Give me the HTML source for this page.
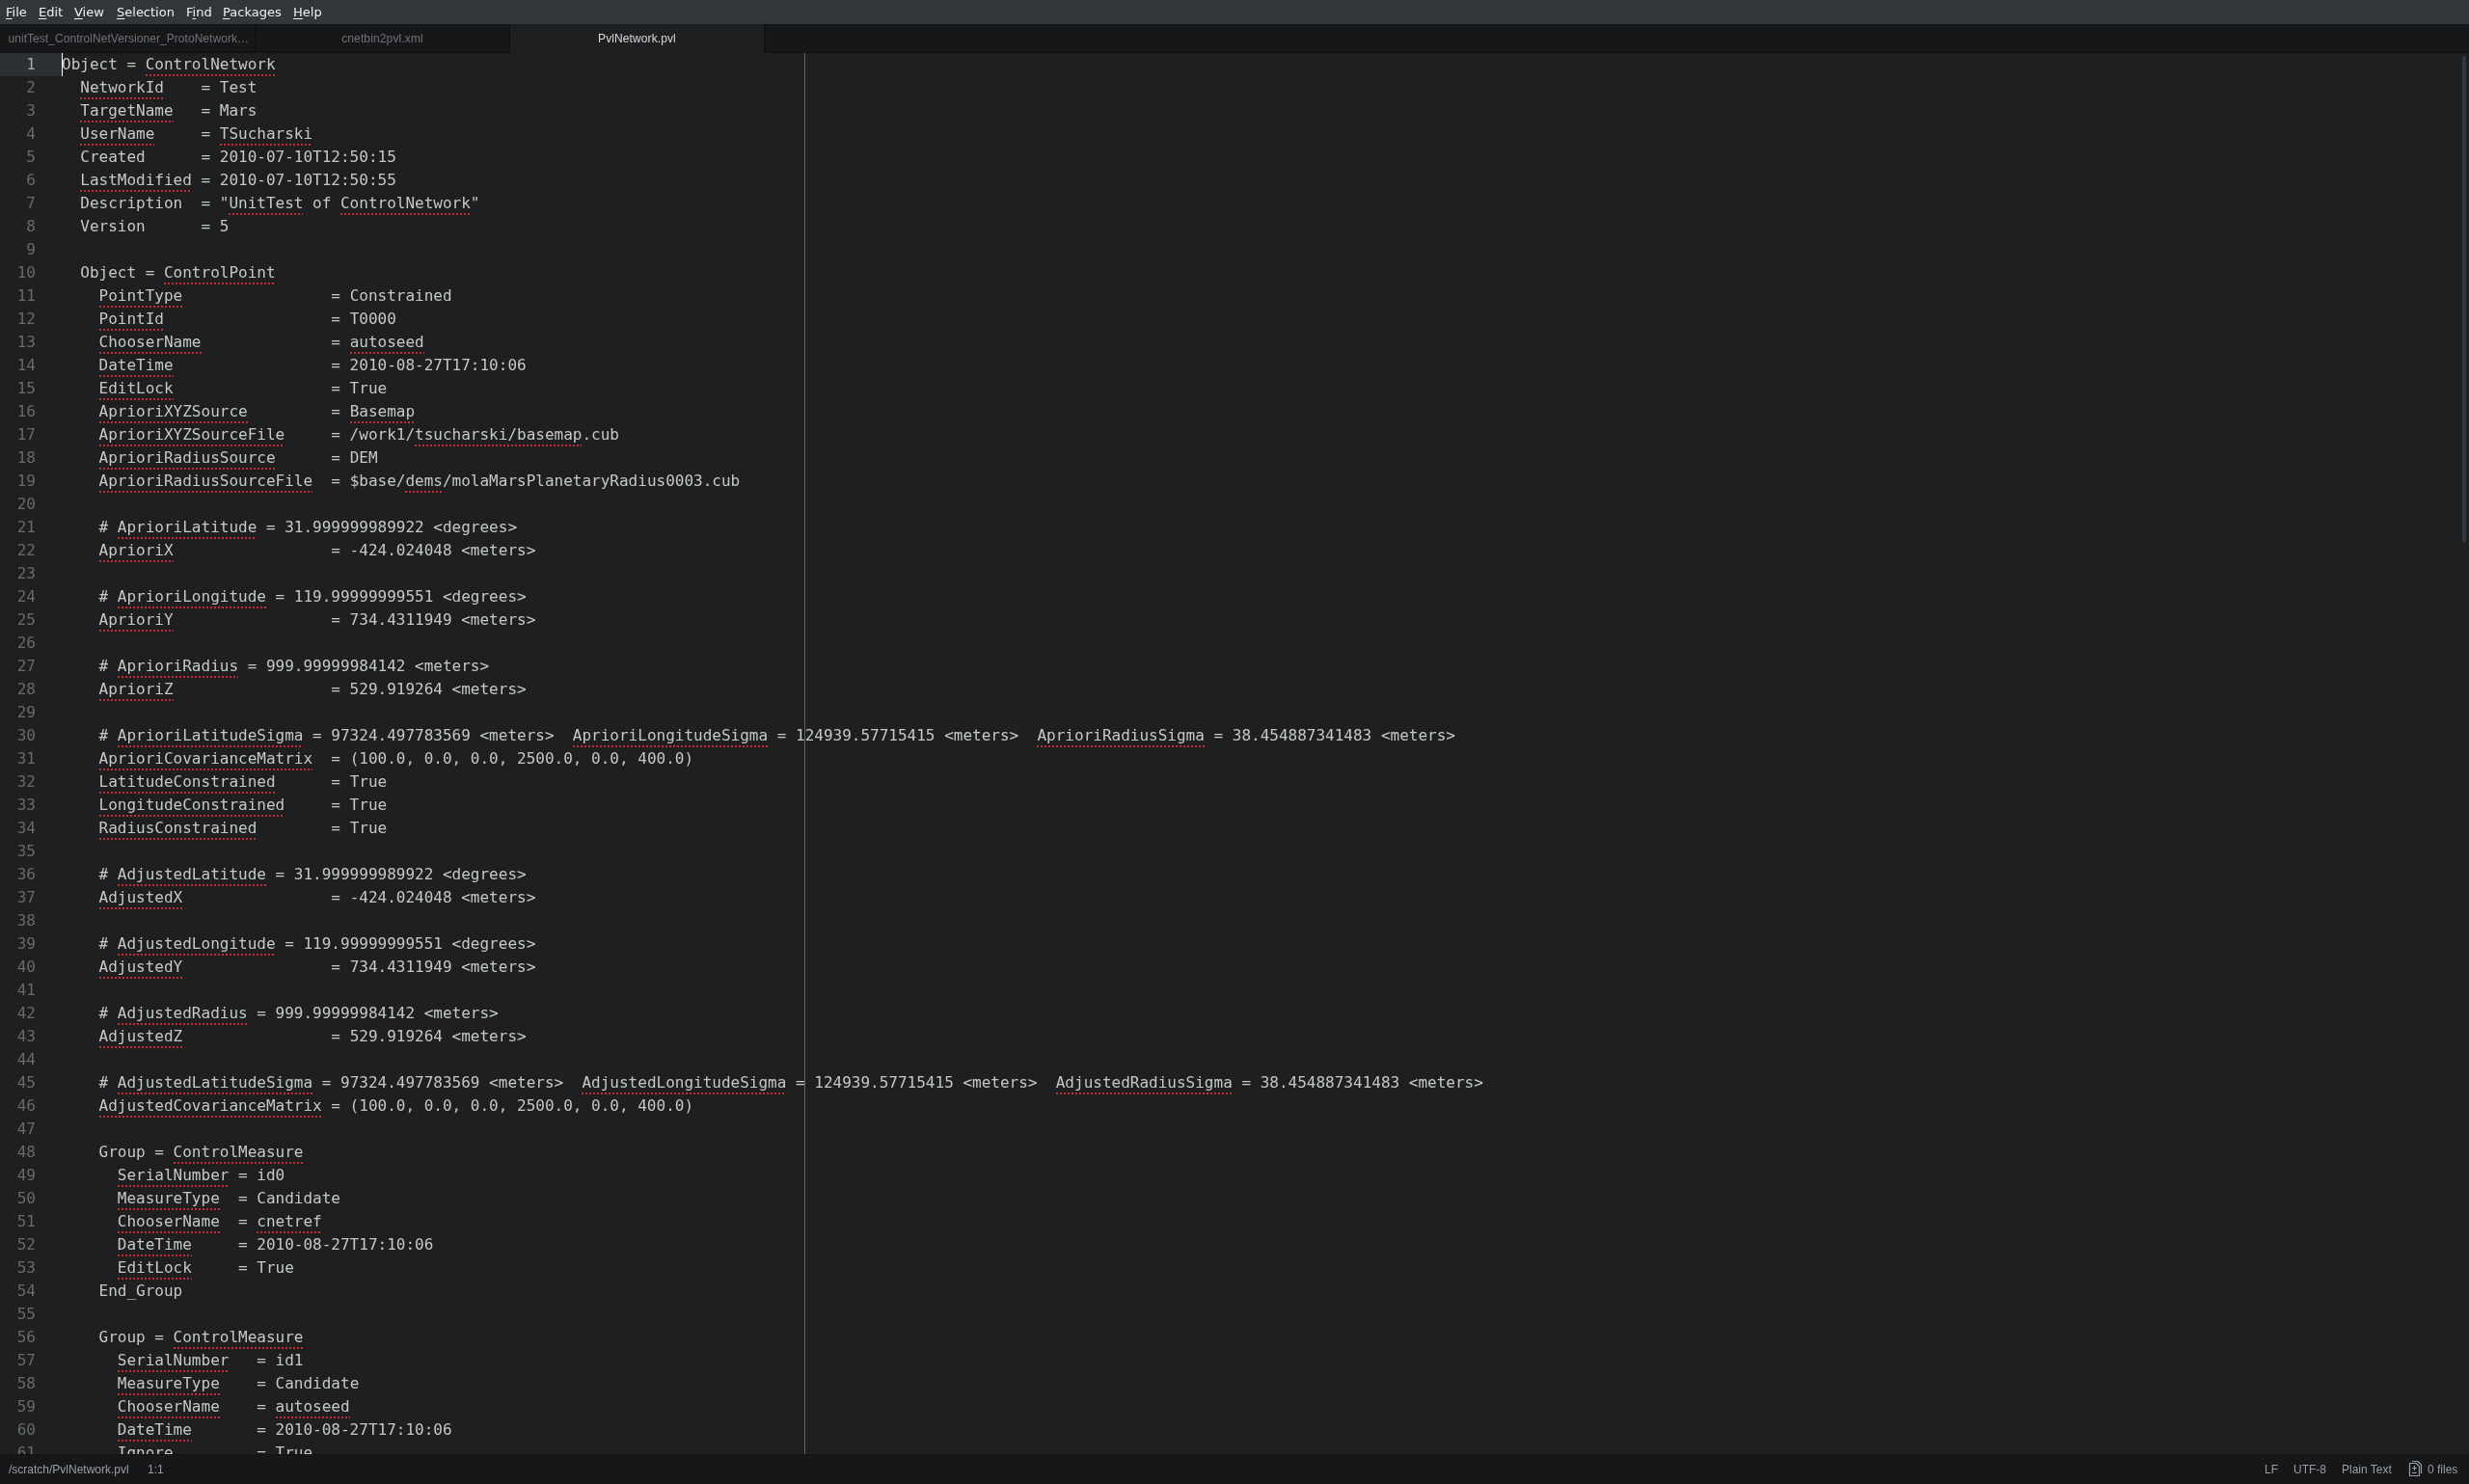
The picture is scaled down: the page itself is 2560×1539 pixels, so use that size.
<!DOCTYPE html>
<html>
<head>
<meta charset="utf-8">
<title>PvlNetwork.pvl - Atom</title>
<style>
html, body { margin: 0; padding: 0; }
body { width: 2560px; height: 1539px; overflow: hidden; background: #1d1f21; position: relative; font-family: "DejaVu Sans", "Liberation Sans", sans-serif; }
#app { position: absolute; left: 0; top: 0; width: 2560px; height: 1539px; will-change: transform; }
#menubar { position: absolute; left: 0; top: 0; width: 2560px; height: 25px; background: #31363b; color: #eff0f1; font-size: 13px; line-height: 25px; white-space: nowrap; }
#menubar span.mi { position: absolute; top: 0; }
#menubar u { text-decoration: underline; text-underline-offset: 2px; }
#tabbar { position: absolute; left: 0; top: 25px; width: 2560px; height: 30px; background: #161719; box-shadow: inset 0 -1px 0 #111214, inset 0 1px 0 #121315; }
.tab { position: absolute; top: 0; height: 29px; width: 264px; box-sizing: border-box; border-left: 1px solid #101113; color: #6f7275; font-size: 12px; line-height: 31px; text-align: center; white-space: nowrap; overflow: hidden; font-family: "Liberation Sans", sans-serif; }
.tab.active { background: #1d1f21; color: #d7dadc; height: 30px; }
#editor { position: absolute; left: 0; top: 55px; width: 2560px; height: 1453px; overflow: hidden; background: #1d1f21; font-family: "DejaVu Sans Mono", "Liberation Mono", monospace; font-size: 16px; line-height: 24px; color: #c5c8c6; }
#gutter { position: absolute; left: 0; top: 0; width: 64px; }
#gutter .n { height: 24px; text-align: right; padding-right: 27px; color: #686b6a; }
#gutter .n.cur { background: #2c2f33; color: #a9abaa; }
#code { position: absolute; left: 64px; top: 0; }
#code .line { height: 24px; white-space: pre; }
.m { display: inline-block; height: 24px; vertical-align: top; background: repeating-linear-gradient(to right, rgba(255,51,51,0.75) 0, rgba(255,51,51,0.75) 2px, transparent 2px, transparent 4px) left bottom / 100% 2px no-repeat; }
#cursor { position: absolute; left: 64px; top: 0; width: 1px; height: 24px; background: #fff; }
#wrap { position: absolute; left: 834px; top: 0; width: 1px; height: 1453px; background: #60656a; }
#sb { position: absolute; left: 2553px; top: 3px; width: 4px; height: 505px; border-radius: 2px; background: #32373b; }
#status { position: absolute; left: 0; top: 1508px; width: 2560px; height: 31px; background: #161719; color: #9a9da1; font-size: 12px; line-height: 31px; white-space: nowrap; font-family: "Liberation Sans", sans-serif; box-shadow: inset 0 1px 0 #111214; }
#status svg { position: absolute; left: 2496px; top: 6px; }
#status span { position: absolute; top: 1px; }
</style>
</head>
<body>
<div id="app">
<div id="menubar">
<span class="mi" style="left:6px"><u>F</u>ile</span>
<span class="mi" style="left:40px"><u>E</u>dit</span>
<span class="mi" style="left:77px"><u>V</u>iew</span>
<span class="mi" style="left:121px"><u>S</u>election</span>
<span class="mi" style="left:193px">F<u>i</u>nd</span>
<span class="mi" style="left:231px"><u>P</u>ackages</span>
<span class="mi" style="left:304px"><u>H</u>elp</span>
</div>
<div id="tabbar">
<div class="tab" style="left:0;border-left:0;text-align:left;padding-left:8.5px;letter-spacing:0.05px">unitTest_ControlNetVersioner_ProtoNetwork…</div>
<div class="tab" style="left:264px;letter-spacing:0.13px">cnetbin2pvl.xml</div>
<div class="tab active" style="left:528px;letter-spacing:0.1px">PvlNetwork.pvl</div>
<div class="tab" style="left:792px;width:1px"></div>
</div>
<div id="editor">
<div id="gutter">
<div class="n cur">1</div>
<div class="n">2</div>
<div class="n">3</div>
<div class="n">4</div>
<div class="n">5</div>
<div class="n">6</div>
<div class="n">7</div>
<div class="n">8</div>
<div class="n">9</div>
<div class="n">10</div>
<div class="n">11</div>
<div class="n">12</div>
<div class="n">13</div>
<div class="n">14</div>
<div class="n">15</div>
<div class="n">16</div>
<div class="n">17</div>
<div class="n">18</div>
<div class="n">19</div>
<div class="n">20</div>
<div class="n">21</div>
<div class="n">22</div>
<div class="n">23</div>
<div class="n">24</div>
<div class="n">25</div>
<div class="n">26</div>
<div class="n">27</div>
<div class="n">28</div>
<div class="n">29</div>
<div class="n">30</div>
<div class="n">31</div>
<div class="n">32</div>
<div class="n">33</div>
<div class="n">34</div>
<div class="n">35</div>
<div class="n">36</div>
<div class="n">37</div>
<div class="n">38</div>
<div class="n">39</div>
<div class="n">40</div>
<div class="n">41</div>
<div class="n">42</div>
<div class="n">43</div>
<div class="n">44</div>
<div class="n">45</div>
<div class="n">46</div>
<div class="n">47</div>
<div class="n">48</div>
<div class="n">49</div>
<div class="n">50</div>
<div class="n">51</div>
<div class="n">52</div>
<div class="n">53</div>
<div class="n">54</div>
<div class="n">55</div>
<div class="n">56</div>
<div class="n">57</div>
<div class="n">58</div>
<div class="n">59</div>
<div class="n">60</div>
<div class="n">61</div>
</div>
<div id="code">
<div class="line">Object = <span class="m">ControlNetwork</span></div>
<div class="line">  <span class="m">NetworkId</span>    = Test</div>
<div class="line">  <span class="m">TargetName</span>   = Mars</div>
<div class="line">  <span class="m">UserName</span>     = <span class="m">TSucharski</span></div>
<div class="line">  Created      = 2010-07-10T12:50:15</div>
<div class="line">  <span class="m">LastModified</span> = 2010-07-10T12:50:55</div>
<div class="line">  Description  = "<span class="m">UnitTest</span> of <span class="m">ControlNetwork</span>"</div>
<div class="line">  Version      = 5</div>
<div class="line"></div>
<div class="line">  Object = <span class="m">ControlPoint</span></div>
<div class="line">    <span class="m">PointType</span>                = Constrained</div>
<div class="line">    <span class="m">PointId</span>                  = T0000</div>
<div class="line">    <span class="m">ChooserName</span>              = <span class="m">autoseed</span></div>
<div class="line">    <span class="m">DateTime</span>                 = 2010-08-27T17:10:06</div>
<div class="line">    <span class="m">EditLock</span>                 = True</div>
<div class="line">    <span class="m">AprioriXYZSource</span>         = <span class="m">Basemap</span></div>
<div class="line">    <span class="m">AprioriXYZSourceFile</span>     = /work1/<span class="m">tsucharski/basemap</span>.cub</div>
<div class="line">    <span class="m">AprioriRadiusSource</span>      = DEM</div>
<div class="line">    <span class="m">AprioriRadiusSourceFile</span>  = $base/<span class="m">dems</span>/molaMarsPlanetaryRadius0003.cub</div>
<div class="line"></div>
<div class="line">    # <span class="m">AprioriLatitude</span> = 31.999999989922 &lt;degrees&gt;</div>
<div class="line">    <span class="m">AprioriX</span>                 = -424.024048 &lt;meters&gt;</div>
<div class="line"></div>
<div class="line">    # <span class="m">AprioriLongitude</span> = 119.99999999551 &lt;degrees&gt;</div>
<div class="line">    <span class="m">AprioriY</span>                 = 734.4311949 &lt;meters&gt;</div>
<div class="line"></div>
<div class="line">    # <span class="m">AprioriRadius</span> = 999.99999984142 &lt;meters&gt;</div>
<div class="line">    <span class="m">AprioriZ</span>                 = 529.919264 &lt;meters&gt;</div>
<div class="line"></div>
<div class="line">    # <span class="m">AprioriLatitudeSigma</span> = 97324.497783569 &lt;meters&gt;  <span class="m">AprioriLongitudeSigma</span> = 124939.57715415 &lt;meters&gt;  <span class="m">AprioriRadiusSigma</span> = 38.454887341483 &lt;meters&gt;</div>
<div class="line">    <span class="m">AprioriCovarianceMatrix</span>  = (100.0, 0.0, 0.0, 2500.0, 0.0, 400.0)</div>
<div class="line">    <span class="m">LatitudeConstrained</span>      = True</div>
<div class="line">    <span class="m">LongitudeConstrained</span>     = True</div>
<div class="line">    <span class="m">RadiusConstrained</span>        = True</div>
<div class="line"></div>
<div class="line">    # <span class="m">AdjustedLatitude</span> = 31.999999989922 &lt;degrees&gt;</div>
<div class="line">    <span class="m">AdjustedX</span>                = -424.024048 &lt;meters&gt;</div>
<div class="line"></div>
<div class="line">    # <span class="m">AdjustedLongitude</span> = 119.99999999551 &lt;degrees&gt;</div>
<div class="line">    <span class="m">AdjustedY</span>                = 734.4311949 &lt;meters&gt;</div>
<div class="line"></div>
<div class="line">    # <span class="m">AdjustedRadius</span> = 999.99999984142 &lt;meters&gt;</div>
<div class="line">    <span class="m">AdjustedZ</span>                = 529.919264 &lt;meters&gt;</div>
<div class="line"></div>
<div class="line">    # <span class="m">AdjustedLatitudeSigma</span> = 97324.497783569 &lt;meters&gt;  <span class="m">AdjustedLongitudeSigma</span> = 124939.57715415 &lt;meters&gt;  <span class="m">AdjustedRadiusSigma</span> = 38.454887341483 &lt;meters&gt;</div>
<div class="line">    <span class="m">AdjustedCovarianceMatrix</span> = (100.0, 0.0, 0.0, 2500.0, 0.0, 400.0)</div>
<div class="line"></div>
<div class="line">    Group = <span class="m">ControlMeasure</span></div>
<div class="line">      <span class="m">SerialNumber</span> = id0</div>
<div class="line">      <span class="m">MeasureType</span>  = Candidate</div>
<div class="line">      <span class="m">ChooserName</span>  = <span class="m">cnetref</span></div>
<div class="line">      <span class="m">DateTime</span>     = 2010-08-27T17:10:06</div>
<div class="line">      <span class="m">EditLock</span>     = True</div>
<div class="line">    End_Group</div>
<div class="line"></div>
<div class="line">    Group = <span class="m">ControlMeasure</span></div>
<div class="line">      <span class="m">SerialNumber</span>   = id1</div>
<div class="line">      <span class="m">MeasureType</span>    = Candidate</div>
<div class="line">      <span class="m">ChooserName</span>    = <span class="m">autoseed</span></div>
<div class="line">      <span class="m">DateTime</span>       = 2010-08-27T17:10:06</div>
<div class="line">      Ignore         = True</div>
</div>
<div id="cursor"></div>
<div id="wrap"></div>
<div id="sb"></div>
</div>
<div id="status">
<span style="left:9px">/scratch/PvlNetwork.pvl</span>
<span style="left:153px">1:1</span>
<span style="left:2348px">LF</span>
<span style="left:2378px">UTF-8</span>
<span style="left:2428px">Plain Text</span>
<svg width="17" height="19" viewBox="0 0 17 19" fill="none" stroke="#9a9da1" stroke-width="1.2" stroke-linejoin="round" stroke-linecap="butt"><path d="M2.5 3.5H9.2L12.5 6.8V16.5H2.5Z"/><path d="M5.2 1.5H10.8L14.5 5.2V14"/><path d="M5 8.5H10M7.5 6V11M5 13.5H10"/></svg>
<span style="left:2517px">0 files</span>
</div>
</div>
</body>
</html>
